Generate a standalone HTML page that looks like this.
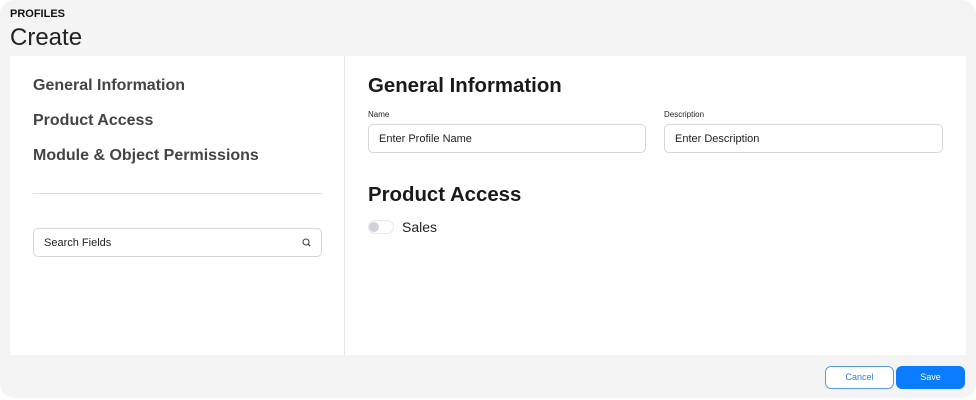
<!DOCTYPE html>
<html><head><style>
*{margin:0;padding:0;box-sizing:border-box}
body{width:976px;height:400px;background:#fff;font-family:"Liberation Sans",Arial,sans-serif;position:relative;overflow:hidden}
.wrap{position:absolute;left:0;top:0;width:976px;height:398px;background:#f4f4f4;border-radius:14px}
.a{position:absolute;white-space:nowrap}
.panel{position:absolute;left:10px;top:56px;width:956px;height:299px;background:#fff}
.vd{position:absolute;left:344px;top:56px;width:1px;height:299px;background:#e8e8e8}
.nav{font-size:16px;font-weight:bold;color:#444}
.inp{position:absolute;height:29px;border:1px solid #d6d6d6;border-radius:5px;font-size:11px;color:#222;padding:8px 0 0 10px;background:#fff}
.lbl{font-size:8px;color:#222}
h2{font-size:20.4px;font-weight:bold;color:#1a1a1a}
.btn{position:absolute;top:366px;height:23px;border-radius:6px;font-size:9px;text-align:center;line-height:21px}
</style></head><body>
<div class="wrap"></div>
<div class="a" style="left:10px;top:8px;font-size:11px;font-weight:bold;color:#111">PROFILES</div>
<div class="a" style="left:10px;top:24px;font-size:24px;color:#222">Create</div>
<div class="panel"></div>
<div class="vd"></div>
<div class="a nav" style="left:33px;top:77px">General Information</div>
<div class="a nav" style="left:33px;top:112px">Product Access</div>
<div class="a nav" style="left:33px;top:147px">Module &amp; Object Permissions</div>
<div class="a" style="left:33px;top:193px;width:289px;height:1px;background:#ddd"></div>
<div class="inp" style="left:33px;top:228px;width:289px;">Search Fields
<svg style="position:absolute;right:10px;top:9px" width="9" height="9" viewBox="0 0 9 9"><circle cx="4" cy="4" r="3" fill="none" stroke="#444" stroke-width="1.1"/><path d="M6.2 6.2L8.2 8.2" stroke="#444" stroke-width="1.1"/></svg></div>
<h2 class="a" style="left:368px;top:75px">General Information</h2>
<div class="a lbl" style="left:368px;top:110px">Name</div>
<div class="a lbl" style="left:664px;top:110px">Description</div>
<div class="inp" style="left:368px;top:124px;width:278px">Enter Profile Name</div>
<div class="inp" style="left:664px;top:124px;width:279px">Enter Description</div>
<h2 class="a" style="left:368px;top:184px">Product Access</h2>
<div class="a" style="left:368px;top:220px;width:26px;height:14px;border-radius:7px;background:#fff;border:1px solid #e6e6ec"></div>
<div class="a" style="left:369px;top:222px;width:10px;height:10px;border-radius:5px;background:#d0d1da"></div>
<div class="a" style="left:402px;top:219px;font-size:14px;color:#222">Sales</div>
<div class="btn" style="left:825px;width:69px;background:#fff;border:1px solid #5a9be0;color:#2a7fe0">Cancel</div>
<div class="btn" style="left:896px;width:69px;background:#0a7cff;color:#fff;border:1px solid #0a7cff">Save</div>
</body></html>
